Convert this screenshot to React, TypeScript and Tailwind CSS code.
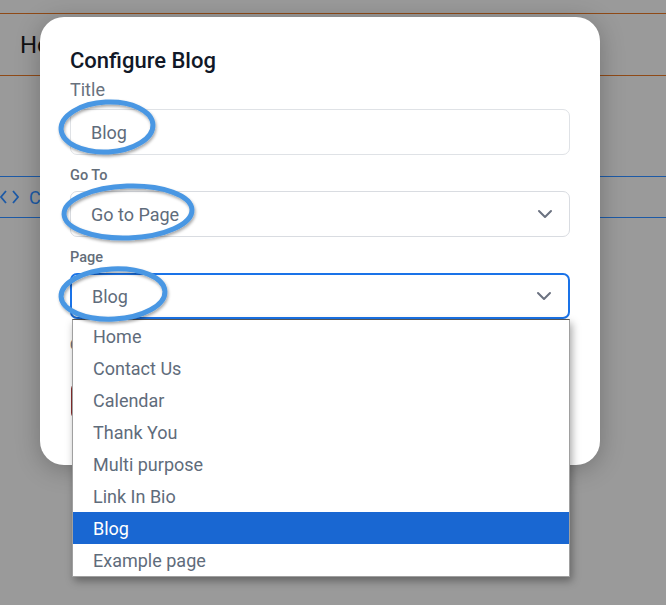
import React from 'react';
import { ChevronDown } from 'lucide-react';

const pages = ['Home', 'Contact Us', 'Calendar', 'Thank You', 'Multi purpose', 'Link In Bio', 'Blog', 'Example page'];

const SelectBox: React.FC<{ value: string; focused?: boolean }> = ({ value, focused }) => (
  <div
    className={`flex h-[46px] items-center justify-between rounded-[7px] bg-white pl-[20px] pr-[12px] text-[18px] text-[#5f6c7b] ${
      focused ? 'border-2 border-[#1a73e8] pl-[19px]' : 'border border-[#d9dce1]'
    }`}
  >
    <span>{value}</span>
    <ChevronDown size={24} strokeWidth={2} className="text-[#6b7280]" />
  </div>
);

export default function App() {
  return (
    <div className="relative h-[605px] w-full overflow-hidden bg-[#9a9a9a] font-['Roboto',sans-serif]">
      {/* page behind the overlay */}
      <div className="pt-[13px]">
        <div className="flex h-[63px] items-center border-y border-[#8f4a17] pl-[20px] text-[24px] text-[#111111]">
          Home
        </div>
        <div className="mt-[100px] flex h-[42px] items-center gap-[10px] border-y border-[#1d5aa6] text-[18px] text-[#1d5aa6]">
          <svg width="19" height="14" viewBox="0 0 19 14" fill="none" stroke="currentColor" strokeWidth="1.8">
            <polyline points="6,1 1,7 6,13" />
            <polyline points="13,1 18,7 13,13" />
          </svg>
          <span>Code</span>
        </div>
      </div>

      {/* modal */}
      <div className="absolute left-[40px] top-[17px] h-[448px] w-[560px] rounded-[24px] bg-white px-[30px] pt-[30px] shadow-[0_4px_24px_rgba(0,0,0,0.25)]">
        <h2 className="text-[22px] font-medium leading-[28px] text-[#111827]">Configure Blog</h2>
        <div className="mt-[3px] text-[18px] leading-[24px] text-[#68717d]">Title</div>
        <div className="mt-[7px] flex h-[46px] items-center rounded-[7px] border border-[#dfe2e6] pl-[20px] text-[18px] text-[#5f6c7b]">
          Blog
        </div>
        <div className="mt-[11px] text-[14.5px] font-medium leading-[20px] text-[#636d79]">Go To</div>
        <div className="mt-[5px]">
          <SelectBox value="Go to Page" />
        </div>
        <div className="mt-[11px] text-[14.5px] font-medium leading-[20px] text-[#636d79]">Page</div>
        <div className="mt-[5px]">
          <SelectBox value="Blog" focused />
        </div>
        <div className="mt-[16px] text-[14px] font-medium leading-[20px] text-[#68717d]">Open in</div>
        <div className="ml-[1px] mt-[28px] h-[36px] w-[120px] rounded-[6px] border-2 border-[#8a2f2f]" />
      </div>

      {/* native dropdown list */}
      <div className="absolute left-[72px] top-[319px] w-[498px] border border-t-[#555555] border-x-[#a0a0a0] border-b-[#a0a0a0] bg-white shadow-[2px_4px_8px_rgba(0,0,0,0.35)]">
        {pages.map((p) => (
          <div
            key={p}
            className={`flex h-[32px] items-center pl-[20px] text-[18px] ${
              p === 'Blog' ? 'bg-[#1967d2] text-white' : 'text-[#5f6c7b]'
            }`}
          >
            {p}
          </div>
        ))}
      </div>

      {/* annotation ellipses */}
      <svg className="pointer-events-none absolute left-0 top-0" width="666" height="605">
        <defs>
          <filter id="sh" x="-20%" y="-20%" width="140%" height="140%">
            <feDropShadow dx="1" dy="2" stdDeviation="1.5" floodColor="#000" floodOpacity="0.35" />
          </filter>
        </defs>
        <g fill="none" stroke="#4a97e3" strokeWidth="5" filter="url(#sh)">
          <ellipse cx="107" cy="127" rx="46" ry="25" transform="rotate(-3 107 127)" />
          <ellipse cx="128" cy="212" rx="64" ry="26" transform="rotate(-2 128 212)" />
          <ellipse cx="113" cy="294" rx="52" ry="25" transform="rotate(-3 113 294)" />
        </g>
      </svg>
    </div>
  );
}
